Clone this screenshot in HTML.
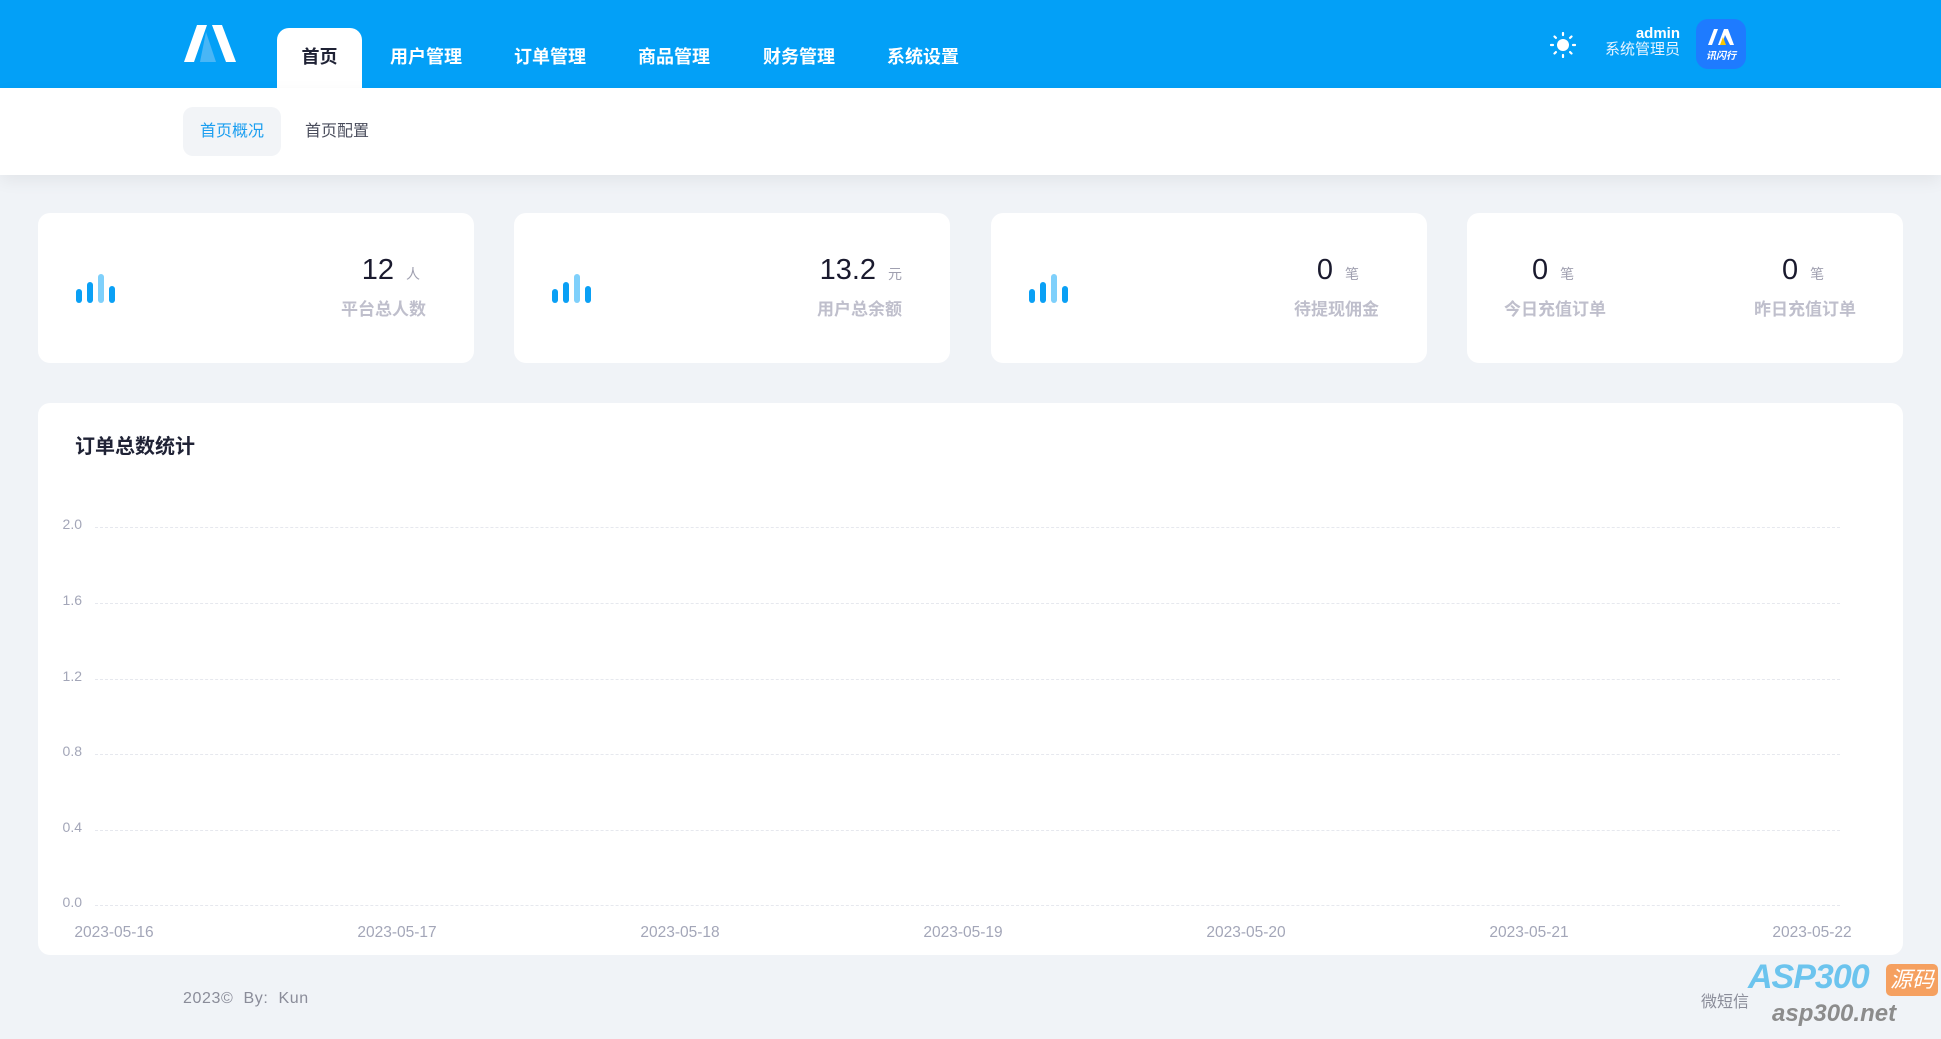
<!DOCTYPE html>
<html><head><meta charset="utf-8"><style>
*{margin:0;padding:0;box-sizing:border-box}
body{width:1941px;height:1039px;background:#f0f3f7;font-family:"Liberation Sans","Noto Sans CJK SC",sans-serif;position:relative;overflow:hidden}
.a{position:absolute}
.hdr{left:0;top:0;width:1941px;height:88px;background:#03a0f7}
.tab{top:28px;height:60px;color:#fff;font-size:18px;font-weight:bold;line-height:58px;text-align:center}
.sub{left:0;top:88px;width:1941px;height:87px;background:#fff;box-shadow:0 6px 16px rgba(0,0,0,.06)}
.card{background:#fff;border-radius:12px;top:213px;height:150px;width:436px}
.num{font-size:29px;color:#1a1a2e;top:41px;text-align:right}
.unit{font-size:14px;color:#a0a0b0}
.lbl{font-size:17px;font-weight:bold;color:#bfbfcc;top:82px}
.bars{left:38px;top:60px;width:40px;height:30px}
.bars i{position:absolute;bottom:0;width:6px;border-radius:3px;background:#0aa0f5}
.yl{left:50px;width:32px;text-align:right;font-size:14px;color:#a3a6b8}
.gl{left:95px;width:1745px;border-top:1px dashed #e6e8ee}
.xl{top:924px;width:130px;text-align:center;font-size:15.5px;color:#a3a6b8}
</style></head><body>
<div class="a hdr"></div>
<svg class="a" style="left:182px;top:24px" width="56" height="40" viewBox="0 0 56 40">
<path d="M15 1h10L12 38H2z" fill="#fff"/>
<path d="M30 1h10l14 37H44z" fill="#fff"/>
<path d="M24 8l10 30H18z" fill="#5bbcf5" opacity=".8"/>
</svg>
<div class="a tab" style="left:277px;width:85px;background:#fff;border-radius:12px 12px 0 0;color:#1f2235">首页</div>
<div class="a tab" style="left:382px;width:88px">用户管理</div>
<div class="a tab" style="left:506px;width:88px">订单管理</div>
<div class="a tab" style="left:630px;width:88px">商品管理</div>
<div class="a tab" style="left:755px;width:88px">财务管理</div>
<div class="a tab" style="left:879px;width:88px">系统设置</div>
<svg class="a" style="left:1550px;top:32px" width="26" height="26" viewBox="0 0 26 26" fill="#fff">
<circle cx="13" cy="13" r="6"/><g stroke="#fff" stroke-width="2.2" stroke-linecap="round"><path d="M13 1v2M13 23v2M1 13h2M23 13h2M4.5 4.5l1.4 1.4M20.1 20.1l1.4 1.4M4.5 21.5l1.4-1.4M20.1 5.9l1.4-1.4"/></g></svg>
<div class="a" style="left:1580px;top:25px;width:100px;text-align:right;color:#fff;font-size:15px;font-weight:bold;line-height:17px">admin</div>
<div class="a" style="left:1580px;top:41px;width:100px;text-align:right;color:#e8f4ff;font-size:15px;line-height:17px">系统管理员</div>
<div class="a" style="left:1696px;top:19px;width:50px;height:50px;background:#1e7bff;border-radius:12px"></div>
<svg class="a" style="left:1706px;top:28px" width="30" height="18" viewBox="0 0 30 18"><path d="M2 17L8 1h4L6 17zM12 17l6-16h4l6 16h-4L19 7l-3 10z" fill="#fff"/><path d="M14 17l3-8 3 8z" fill="#f7c600"/></svg>
<div class="a" style="left:1703px;top:47px;width:36px;text-align:center;color:#fff;font-size:10px;font-style:italic;font-weight:bold">讯闪行</div>
<div class="a sub"></div>
<div class="a" style="left:183px;top:107px;width:98px;height:49px;background:#f2f4f7;border-radius:10px;color:#1a9ef0;font-size:16px;line-height:49px;text-align:center">首页概况</div>
<div class="a" style="left:305px;top:107px;height:49px;color:#4a4d5c;font-size:16px;line-height:49px">首页配置</div>

<div class="a card" style="left:38px">
 <div class="a bars"><i style="left:0;height:14px"></i><i style="left:11px;height:21px"></i><i style="left:22px;height:29px;background:#7fd0fb"></i><i style="left:33px;height:17px"></i></div>
 <div class="a num" style="right:54px;width:200px">12 <span class="unit">&nbsp;人</span></div>
 <div class="a lbl" style="left:303px">平台总人数</div>
</div>
<div class="a card" style="left:514px">
 <div class="a bars"><i style="left:0;height:14px"></i><i style="left:11px;height:21px"></i><i style="left:22px;height:29px;background:#7fd0fb"></i><i style="left:33px;height:17px"></i></div>
 <div class="a num" style="right:48px;width:200px">13.2 <span class="unit">&nbsp;元</span></div>
 <div class="a lbl" style="left:303px">用户总余额</div>
</div>
<div class="a card" style="left:991px">
 <div class="a bars"><i style="left:0;height:14px"></i><i style="left:11px;height:21px"></i><i style="left:22px;height:29px;background:#7fd0fb"></i><i style="left:33px;height:17px"></i></div>
 <div class="a num" style="right:68px;width:200px">0 <span class="unit">&nbsp;笔</span></div>
 <div class="a lbl" style="left:303px">待提现佣金</div>
</div>
<div class="a card" style="left:1467px">
 <div class="a num" style="left:65px;text-align:left">0 <span class="unit">&nbsp;笔</span></div>
 <div class="a lbl" style="left:37px">今日充值订单</div>
 <div class="a num" style="left:315px;text-align:left">0 <span class="unit">&nbsp;笔</span></div>
 <div class="a lbl" style="left:287px">昨日充值订单</div>
</div>

<div class="a" style="left:38px;top:403px;width:1865px;height:552px;background:#fff;border-radius:12px"></div>
<div class="a" style="left:75px;top:430px;font-size:20px;font-weight:bold;color:#1f2235">订单总数统计</div>
<div class="a yl" style="top:516px">2.0</div><div class="a gl" style="top:527px"></div>
<div class="a yl" style="top:592px">1.6</div><div class="a gl" style="top:603px"></div>
<div class="a yl" style="top:668px">1.2</div><div class="a gl" style="top:679px"></div>
<div class="a yl" style="top:743px">0.8</div><div class="a gl" style="top:754px"></div>
<div class="a yl" style="top:819px">0.4</div><div class="a gl" style="top:830px"></div>
<div class="a yl" style="top:894px">0.0</div><div class="a gl" style="top:905px"></div>
<div class="a xl" style="left:49px">2023-05-16</div>
<div class="a xl" style="left:332px">2023-05-17</div>
<div class="a xl" style="left:615px">2023-05-18</div>
<div class="a xl" style="left:898px">2023-05-19</div>
<div class="a xl" style="left:1181px">2023-05-20</div>
<div class="a xl" style="left:1464px">2023-05-21</div>
<div class="a xl" style="left:1747px">2023-05-22</div>

<div class="a" style="left:183px;top:990px;font-size:16px;color:#8a8c99;letter-spacing:.6px">2023©&nbsp; By:&nbsp; Kun</div>
<div class="a" style="left:1701px;top:988px;font-size:16px;color:#8a8c99">微短信</div>
<div class="a" style="left:1748px;top:958px;font-size:34px;font-style:italic;font-weight:bold;color:#6cc4ee;letter-spacing:-1px">ASP300</div>
<div class="a" style="left:1886px;top:964px;width:52px;height:32px;background:#f5a060;border-radius:5px;color:#fff;font-size:22px;font-style:italic;text-align:center;line-height:32px">源码</div>
<div class="a" style="left:1772px;top:1000px;font-size:24px;font-style:italic;font-weight:bold;color:#8c8c8c">asp300.net</div>
</body></html>
